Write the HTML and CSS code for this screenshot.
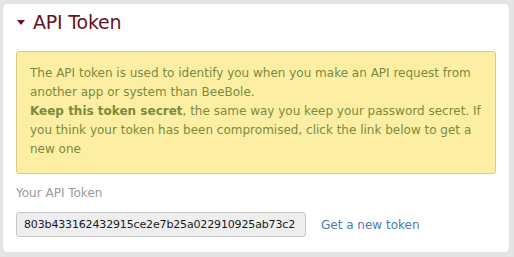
FILE: index.html
```html
<!DOCTYPE html>
<html lang="en">
<head>
    <meta charset="UTF-8">
    <title>API Token</title>
    <link rel="stylesheet" href="styles.css">
</head>
<body>
    <div class="panel">
        <h2 class="panel-title"><span class="caret"></span>API Token</h2>

        <div class="notice">
            <p>The API token is used to identify you when you make an API request from another app or system than BeeBole.</p>
            <p><strong>Keep this token secret</strong>, the same way you keep your password secret. If you think your token has been compromised, click the link below to get a new one</p>
        </div>

        <label class="field-label" for="token">Your API Token</label>
        <div class="token-row">
            <input type="text" id="token" class="token-input" value="803b433162432915ce2e7b25a022910925ab73c2" readonly>
            <a href="#" class="token-link">Get a new token</a>
        </div>
    </div>
</body>
</html>
```

FILE: styles.css
```css
* {
    box-sizing: border-box;
    margin: 0;
    padding: 0;
}

body {
    background-color: #e4e4e4;
    font-family: 'DejaVu Sans', Verdana, sans-serif;
    font-size: 12px;
    padding: 4px 5px 5px 3px;
}

.panel {
    background-color: #fff;
    border-radius: 4px;
    height: 248px;
    padding: 0 13px 0 13px;
    box-shadow: 0 0 1px rgba(0, 0, 0, 0.15);
}

.panel-title {
    display: flex;
    align-items: center;
    height: 34px;
    padding-top: 2px;
    font-size: 19px;
    font-weight: normal;
    letter-spacing: -0.2px;
    color: #6a1320;
}

.caret {
    width: 0;
    height: 0;
    border-left: 4px solid transparent;
    border-right: 4px solid transparent;
    border-top: 5px solid #6a1320;
    margin: 0 8px 0 1px;
}

.notice {
    margin-top: 13px;
    background-color: #fcefa4;
    border: 1px solid #d6cc85;
    border-radius: 3px;
    padding: 12px 13px 14px 13px;
    color: #7d8a3c;
    line-height: 19px;
}

.notice strong {
    font-weight: bold;
}

.field-label {
    display: block;
    margin-top: 10px;
    color: #9a9a9a;
    line-height: 19px;
}

.token-row {
    display: flex;
    align-items: center;
    gap: 15px;
    margin-top: 9px;
}

.token-input {
    width: 290px;
    height: 25px;
    padding: 0 7px;
    background-color: #eeeeee;
    border: 1px solid #c8c8c8;
    border-radius: 3px;
    font-family: 'DejaVu Sans', Verdana, sans-serif;
    font-size: 11px;
    letter-spacing: -0.15px;
    color: #1a1a1a;
}

.token-link {
    color: #4b7cad;
    text-decoration: none;
}
```
